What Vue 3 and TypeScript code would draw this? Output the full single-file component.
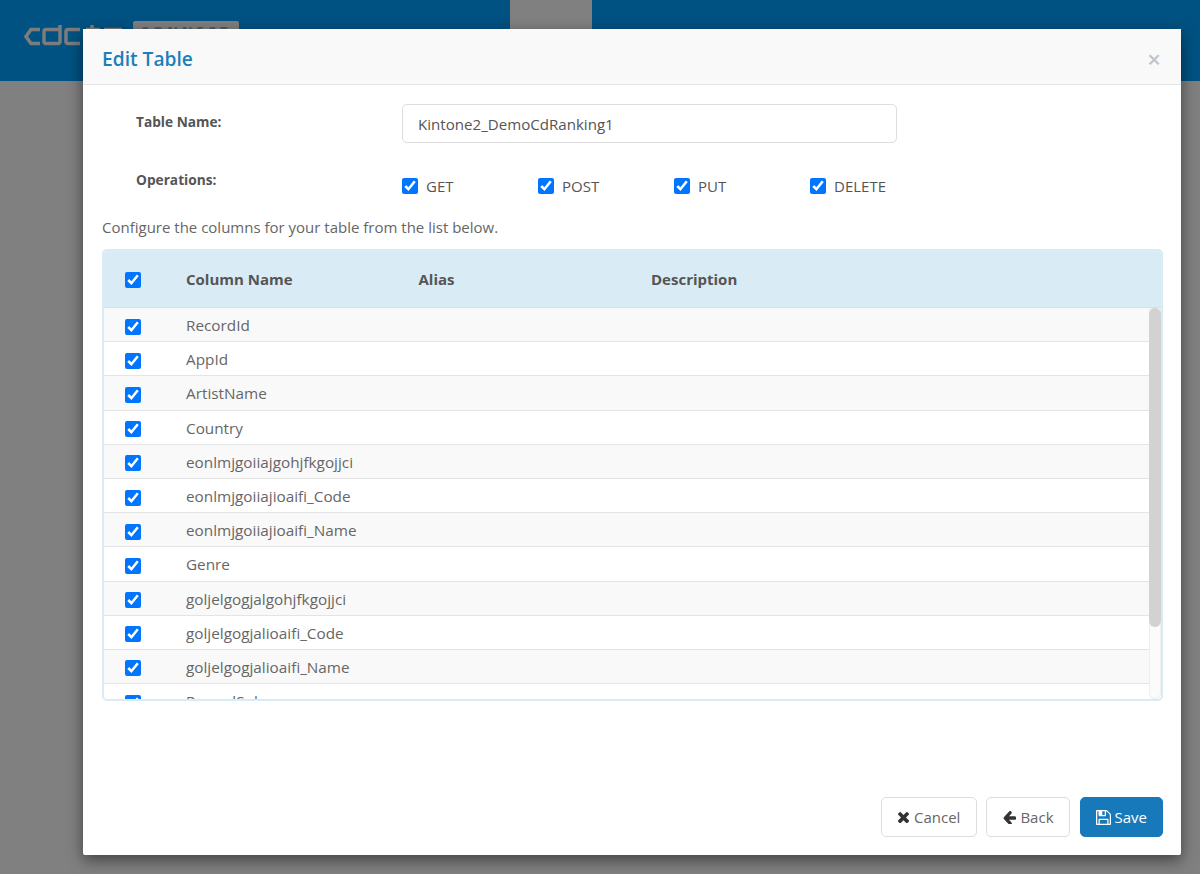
<script setup lang="ts">
const operations = ['GET', 'POST', 'PUT', 'DELETE']
const columns = [
  'RecordId',
  'AppId',
  'ArtistName',
  'Country',
  'eonlmjgoiiajgohjfkgojjci',
  'eonlmjgoiiajioaifi_Code',
  'eonlmjgoiiajioaifi_Name',
  'Genre',
  'goljelgogjalgohjfkgojjci',
  'goljelgogjalioaifi_Code',
  'goljelgogjalioaifi_Name',
  'RecordSubmenu',
]
</script>

<template>
  <div class="page">
    <header class="topbar">
      <div class="brand">
        <svg class="logo" width="100" height="21" viewBox="0 0 100 21" fill="none" stroke="#7c7c7c" stroke-width="3.5">
          <path d="M16 4.500H7L2 11.500l5 7h9" />
          <path d="M36 4.500H22a2 2 0 0 0-2 2v10a2 2 0 0 0 2 2h12a2 2 0 0 0 2-2V0" />
          <path d="M56 4.500H44a2 2 0 0 0-2 2v10a2 2 0 0 0 2 2h12" />
          <path d="M62 4.500h14M68 0v18" />
          <path d="M80 4.500h18" />
        </svg>
        <span class="edition">CONNECT</span>
      </div>
      <div class="gap"></div>
      <div class="rest"></div>
    </header>

    <section class="modal">
      <div class="modal-head">
        <h4>Edit Table</h4>
        <span class="close">&times;</span>
      </div>

      <div class="modal-body">
        <div class="field name-field">
          <label>Table Name:</label>
          <input class="text-input" type="text" value="Kintone2_DemoCdRanking1">
        </div>
        <div class="field ops-field">
          <label>Operations:</label>
          <div class="ops">
            <label v-for="op in operations" :key="op" class="op">
              <input type="checkbox" checked>
              <span>{{ op }}</span>
            </label>
          </div>
        </div>
        <p class="hint">Configure the columns for your table from the list below.</p>

        <div class="table-box">
          <div class="table-head">
            <div class="check-cell"><input type="checkbox" checked></div>
            <div class="col">Column Name</div>
            <div class="col">Alias</div>
            <div class="col">Description</div>
          </div>
          <div class="table-main">
            <div class="table-rows">
              <div v-for="name in columns" :key="name" class="row">
                <div class="check-cell"><input type="checkbox" checked></div>
                <div class="col">{{ name }}</div>
              </div>
            </div>
            <div class="rail"><div class="thumb"></div></div>
          </div>
        </div>
      </div>

      <div class="modal-foot">
        <button class="btn">
          <svg width="11" height="12" viewBox="110 256 1188 1280" preserveAspectRatio="none" fill="currentColor" class="dark"><path d="M1298 1322q0 40-28 68l-136 136q-28 28-68 28t-68-28l-294-294-294 294q-28 28-68 28t-68-28l-136-136q-28-28-28-68t28-68l294-294-294-294q-28-28-28-68t28-68l136-136q28-28 68-28t68 28l294 294 294-294q28-28 68-28t68 28l136 136q28 28 28 68t-28 68l-294 294 294 294q28 28 28 68z" /></svg>
          <span>Cancel</span>
        </button>
        <button class="btn back">
          <svg width="13" height="13" viewBox="128 192 1536 1408" preserveAspectRatio="none" fill="currentColor" class="dark"><path d="M1664 896v128q0 53-32.500 90.500t-84.500 37.500h-704l293 294q38 36 38 90t-38 90l-75 76q-37 37-90 37-52 0-91-37l-651-652q-37-37-37-90 0-52 37-91l651-650q38-38 91-38 52 0 90 38l75 74q38 38 38 91t-38 91l-293 293h704q52 0 84.500 37.500t32.500 90.500z" /></svg>
          <span>Back</span>
        </button>
        <button class="btn primary">
          <svg width="15" height="15" viewBox="128 128 1536 1536" fill="currentColor"><path d="M512 1536h768v-384h-768v384zm896 0h128v-896q0-14-10-38.500t-20-34.500l-281-281q-10-10-34-20t-39-10v416q0 40-28 68t-68 28h-576q-40 0-68-28t-28-68v-416h-128v1280h128v-416q0-40 28-68t68-28h832q40 0 68 28t28 68v416zm-384-928v-320q0-13-9.500-22.500t-22.500-9.500h-192q-13 0-22.500 9.500t-9.500 22.500v320q0 13 9.500 22.500t22.500 9.500h192q13 0 22.500-9.500t9.500-22.500zm640 32v928q0 40-28 68t-68 28h-1344q-40 0-68-28t-28-68v-1344q0-40 28-68t68-28h928q40 0 88 20t76 48l280 280q28 28 48 76t20 88z" /></svg>
          <span>Save</span>
        </button>
      </div>
    </section>
  </div>
</template>

<style>
html, body {
  margin: 0;
  overflow: hidden;
}
</style>

<style scoped>
.page {
  position: relative;
  height: 874px;
  background: #808080;
  font-family: "Open Sans", "Liberation Sans", sans-serif;
  font-size: 15px;
  color: #555;
}
.topbar {
  display: flex;
  height: 81px;
}
.brand {
  width: 510px;
  background: #005282;
  display: flex;
  align-items: flex-start;
  padding: 21px 0 0 24px;
  box-sizing: border-box;
  gap: 9px;
}
.logo {
  margin-top: 4px;
}
.edition {
  width: 106px;
  height: 20px;
  box-sizing: border-box;
  padding-top: 1px;
  background: #7f7f7f;
  border-radius: 2px;
  color: #3f5a6e;
  font-size: 13px;
  font-weight: 700;
  line-height: 18px;
  letter-spacing: 4px;
  text-align: center;
}
.gap {
  width: 82px;
}
.rest {
  flex: 1;
  background: #005282;
}

.modal {
  position: absolute;
  left: 83px;
  top: 29px;
  width: 1098px;
  height: 826px;
  display: flex;
  flex-direction: column;
  background: #fff;
  border-radius: 2px;
  box-shadow: 0 5px 15px rgba(0, 0, 0, 0.5);
}
.modal-head {
  height: 56px;
  box-sizing: border-box;
  display: flex;
  align-items: center;
  justify-content: space-between;
  padding: 4px 20px 0 19px;
  background: #f9f9f9;
  border-bottom: 1px solid #e5e5e5;
}
.modal-head h4 {
  margin: 0;
  font-size: 19.2px;
  font-weight: 600;
  color: #1c7fb9;
}
.close {
  color: #c4c4c4;
  font-size: 24px;
  font-weight: 600;
  line-height: 1;
}

.modal-body {
  padding: 19px 18px 0 19px;
}
.field {
  display: flex;
}
.field > label {
  width: 300px;
  box-sizing: border-box;
  padding-left: 34px;
  font-size: 13.7px;
  font-weight: 700;
}
.name-field {
  height: 62px;
}
.name-field > label {
  padding-top: 8px;
}
.text-input {
  width: 495px;
  height: 39px;
  box-sizing: border-box;
  padding: 0 15px;
  border: 1px solid #ddd;
  border-radius: 5px;
  font: inherit;
  font-size: 15.1px;
  color: #555;
  outline: none;
}
.ops-field {
  height: 51px;
}
.ops-field > label {
  padding-top: 4px;
}
.ops {
  display: flex;
  padding-top: 8px;
}
.op {
  width: 136px;
  height: 24px;
  display: flex;
  align-items: center;
  gap: 8px;
}
input[type="checkbox"] {
  width: 16px;
  height: 16px;
  margin: 0;
  accent-color: #0075ff;
}
.hint {
  margin: 0 0 12px;
  line-height: 20px;
  color: #666;
}

.table-box {
  width: 1061px;
  height: 452px;
  box-sizing: border-box;
  border: 2px solid #d9ecf5;
  border-radius: 5px;
  overflow: hidden;
}
.table-head {
  height: 57px;
  display: flex;
  align-items: center;
  background: #d9ecf5;
  font-weight: 700;
  border-bottom: 1px solid #cfe3ee;
  box-sizing: border-box;
}
.table-head .check-cell {
  padding-top: 2px;
}
.check-cell {
  width: 82px;
  box-sizing: border-box;
  padding-left: 21px;
  padding-top: 4px;
  display: flex;
  align-items: center;
}
.col {
  width: 232.5px;
}
.table-main {
  display: flex;
  height: 391px;
}
.table-rows {
  flex: 1;
  overflow: hidden;
}
.rail {
  width: 12px;
  box-sizing: border-box;
  border-radius: 0 0 6px 6px;
  background: #fbfbfb;
  box-shadow: inset 0 0 0 1px #eee;
}
.thumb {
  height: 319px;
  background: #d2d2d2;
  border-radius: 6px;
}
.row {
  height: 34.2px;
  box-sizing: border-box;
  display: flex;
  align-items: center;
  border-bottom: 1px solid #e4e4e4;
  font-size: 15.3px;
  color: #666;
}
.row .col {
  padding-top: 1px;
}
.row:nth-child(odd) {
  background: #f9f9f9;
}

.modal-foot {
  margin-top: auto;
  display: flex;
  justify-content: flex-end;
  gap: 9px;
  padding: 0 18px 18px 0;
}
.btn {
  height: 40px;
  box-sizing: border-box;
  padding: 0 16px;
  display: flex;
  align-items: center;
  gap: 5px;
  background: #fff;
  border: 1px solid #ddd;
  border-radius: 5px;
  font: inherit;
  color: #666;
}
.btn .dark {
  color: #333;
}
.back {
  padding-right: 15px;
  gap: 4px;
}
.primary {
  margin-left: 1px;
  padding: 0 15px;
  gap: 4px;
  background: #1779ba;
  border-color: #1779ba;
  color: #fff;
}
</style>
